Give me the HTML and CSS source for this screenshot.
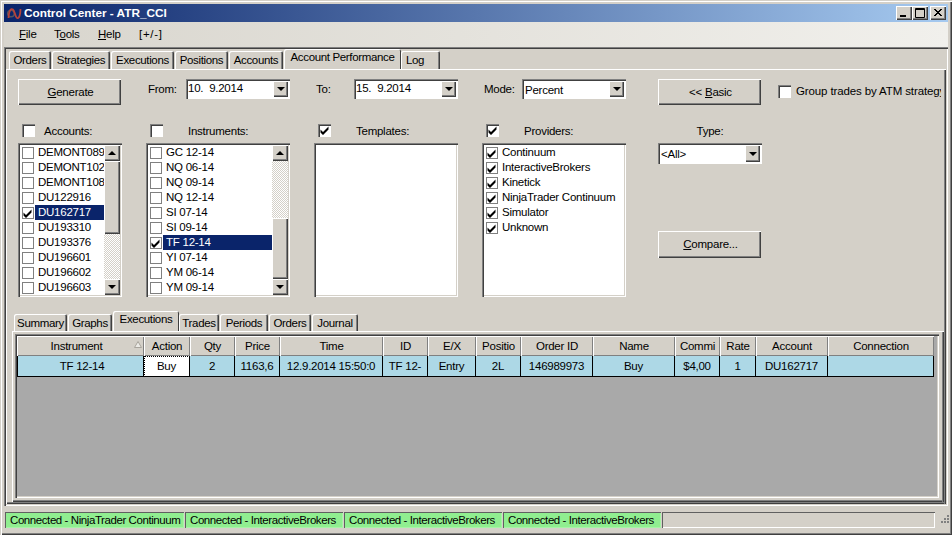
FILE: index.html
```html
<!DOCTYPE html>
<html lang="en">
<head>
<meta charset="utf-8">
<title>Control Center - ATR_CCI</title>
<link rel="stylesheet" href="styles.css">
</head>
<body>
<svg class="defs" width="0" height="0" aria-hidden="true">
  <symbol id="tick" viewBox="0 0 11 11"><path d="M1.5 4.5 L4 7 L9.5 1.5 L9.5 4.5 L4 10 L1.5 7.5 Z" fill="#000"/></symbol>
</svg>
<div class="window">
  <header class="titlebar">
    <svg class="logo" width="15" height="13" viewBox="0 0 15 13"><circle cx="4" cy="6.5" r="3.3" fill="none" stroke="#55555f" stroke-width="1.6"/><path d="M1.5 11 C2 3 4 1 6 2.5 C8 4 8 10 10 11 C12 12 13.5 8 13.5 2" fill="none" stroke="#b5433b" stroke-width="1.8"/></svg>
    <span class="title-text">Control Center - ATR_CCI</span>
    <div class="caption-btns">
      <span class="cap-btn"><svg width="16" height="14" viewBox="0 0 16 14"><rect x="4" y="9" width="6" height="2" fill="#000"/></svg></span>
      <span class="cap-btn"><svg width="16" height="14" viewBox="0 0 16 14"><path d="M3.5 2.5h9v9h-9z M3 3.5h10" fill="none" stroke="#000"/></svg></span>
      <span class="cap-btn cap-close"><svg width="16" height="14" viewBox="0 0 16 14"><path d="M4 3l7 7M5 3l7 7M11 3l-7 7M12 3l-7 7" stroke="#000" fill="none"/></svg></span>
    </div>
  </header>
  <nav class="menubar">
    <span class="menu-item"><u>F</u>ile</span>
    <span class="menu-item">T<u>o</u>ols</span>
    <span class="menu-item"><u>H</u>elp</span>
    <span class="menu-item menu-toggle">[+/-]</span>
  </nav>
  <main class="main">
    <div class="tabs main-tabs">
      <span class="tab">Orders</span>
      <span class="tab">Strategies</span>
      <span class="tab">Executions</span>
      <span class="tab">Positions</span>
      <span class="tab">Accounts</span>
      <span class="tab active">Account Performance</span>
      <span class="tab tab-left">Log</span>
    </div>
    <section class="page">
      <div class="form">
        <button class="btn"><u>G</u>enerate</button>
        <div class="field"><span class="field-label">From:</span>
          <div class="combo"><span class="combo-text">10.  9.2014</span><span class="combo-btn"><i class="arrow-down"></i></span></div></div>
        <div class="field"><span class="field-label">To:</span>
          <div class="combo"><span class="combo-text">15.  9.2014</span><span class="combo-btn"><i class="arrow-down"></i></span></div></div>
        <div class="field"><span class="field-label">Mode:</span>
          <div class="combo combo-select"><span class="combo-text">Percent</span><span class="combo-btn"><i class="arrow-down"></i></span></div></div>
        <button class="btn">&lt;&lt; <u>B</u>asic</button>
        <div class="group-check"><span class="box"></span><span class="group-label">Group trades by ATM strategy</span></div>

        <div class="head head-accounts"><span class="box"></span><span class="head-label">Accounts:</span></div>
        <div class="head"><span class="box"></span><span class="head-label">Instruments:</span></div>
        <div class="head"><span class="box"><svg class="tick"><use href="#tick"/></svg></span><span class="head-label">Templates:</span></div>
        <div class="head"><span class="box"><svg class="tick"><use href="#tick"/></svg></span><span class="head-label">Providers:</span></div>
        <div class="head head-type"><span class="head-label">Type:</span></div>
        <div></div>

        <div class="list list-accounts">
          <ul class="rows">
            <li class="row"><span class="cb"></span><span class="row-text">DEMONT089</span></li>
            <li class="row"><span class="cb"></span><span class="row-text">DEMONT102</span></li>
            <li class="row"><span class="cb"></span><span class="row-text">DEMONT108</span></li>
            <li class="row"><span class="cb"></span><span class="row-text">DU122916</span></li>
            <li class="row"><span class="cb"><svg class="tick"><use href="#tick"/></svg></span><span class="row-text sel">DU162717</span></li>
            <li class="row"><span class="cb"></span><span class="row-text">DU193310</span></li>
            <li class="row"><span class="cb"></span><span class="row-text">DU193376</span></li>
            <li class="row"><span class="cb"></span><span class="row-text">DU196601</span></li>
            <li class="row"><span class="cb"></span><span class="row-text">DU196602</span></li>
            <li class="row"><span class="cb"></span><span class="row-text">DU196603</span></li>
          </ul>
          <div class="scroll"><span class="sb-btn"><i class="arrow-up"></i></span><span class="thumb thumb-accounts"></span><span class="track"></span><span class="sb-btn"><i class="arrow-down"></i></span></div>
        </div>
        <div class="list list-instruments">
          <ul class="rows">
            <li class="row"><span class="cb"></span><span class="row-text">GC 12-14</span></li>
            <li class="row"><span class="cb"></span><span class="row-text">NQ 06-14</span></li>
            <li class="row"><span class="cb"></span><span class="row-text">NQ 09-14</span></li>
            <li class="row"><span class="cb"></span><span class="row-text">NQ 12-14</span></li>
            <li class="row"><span class="cb"></span><span class="row-text">SI 07-14</span></li>
            <li class="row"><span class="cb"></span><span class="row-text">SI 09-14</span></li>
            <li class="row"><span class="cb"><svg class="tick"><use href="#tick"/></svg></span><span class="row-text sel">TF 12-14</span></li>
            <li class="row"><span class="cb"></span><span class="row-text">YI 07-14</span></li>
            <li class="row"><span class="cb"></span><span class="row-text">YM 06-14</span></li>
            <li class="row"><span class="cb"></span><span class="row-text">YM 09-14</span></li>
          </ul>
          <div class="scroll"><span class="sb-btn"><i class="arrow-up"></i></span><span class="track"></span><span class="thumb thumb-instruments"></span><span class="sb-btn"><i class="arrow-down"></i></span></div>
        </div>
        <div class="list"></div>
        <div class="list">
          <ul class="rows">
            <li class="row"><span class="cb"><svg class="tick"><use href="#tick"/></svg></span><span class="row-text">Continuum</span></li>
            <li class="row"><span class="cb"><svg class="tick"><use href="#tick"/></svg></span><span class="row-text">InteractiveBrokers</span></li>
            <li class="row"><span class="cb"><svg class="tick"><use href="#tick"/></svg></span><span class="row-text">Kinetick</span></li>
            <li class="row"><span class="cb"><svg class="tick"><use href="#tick"/></svg></span><span class="row-text">NinjaTrader Continuum</span></li>
            <li class="row"><span class="cb"><svg class="tick"><use href="#tick"/></svg></span><span class="row-text">Simulator</span></li>
            <li class="row"><span class="cb"><svg class="tick"><use href="#tick"/></svg></span><span class="row-text">Unknown</span></li>
          </ul>
        </div>
        <div class="type-col">
          <div class="combo combo-type"><span class="combo-text">&lt;All&gt;</span><span class="combo-btn"><i class="arrow-down"></i></span></div>
          <button class="btn btn-compare"><u>C</u>ompare...</button>
        </div>
        <div></div>
      </div>

      <div class="lower">
        <div class="tabs sub-tabs">
          <span class="tab">Summary</span>
          <span class="tab">Graphs</span>
          <span class="tab active">Executions</span>
          <span class="tab">Trades</span>
          <span class="tab">Periods</span>
          <span class="tab">Orders</span>
          <span class="tab">Journal</span>
        </div>
        <div class="sub-page">
          <div class="grid-frame">
            <div class="table">
              <div class="th th-sorted">Instrument<svg class="sort" width="8" height="7" viewBox="0 0 8 7"><path d="M4 .5L7.5 6.5H.5Z" fill="#ecebe6" stroke="#a8a49c"/></svg></div>
              <div class="th">Action</div><div class="th">Qty</div><div class="th">Price</div><div class="th">Time</div><div class="th">ID</div><div class="th">E/X</div><div class="th">Positio</div><div class="th">Order ID</div><div class="th">Name</div><div class="th">Commi</div><div class="th">Rate</div><div class="th">Account</div><div class="th">Connection</div>
              <div class="td td-first">TF 12-14</div><div class="td td-focus">Buy</div><div class="td">2</div><div class="td">1163,6</div><div class="td">12.9.2014 15:50:0</div><div class="td">TF 12-</div><div class="td">Entry</div><div class="td">2L</div><div class="td">146989973</div><div class="td">Buy</div><div class="td">$4,00</div><div class="td">1</div><div class="td">DU162717</div><div class="td"></div>
            </div>
          </div>
        </div>
      </div>
    </section>
  </main>
  <footer class="statusbar">
    <span class="status conn conn-a">Connected - NinjaTrader Continuum</span>
    <span class="status conn conn-b">Connected - InteractiveBrokers</span>
    <span class="status conn conn-b">Connected - InteractiveBrokers</span>
    <span class="status conn conn-b">Connected - InteractiveBrokers</span>
    <span class="status status-empty"></span>
    <svg class="grip" width="16" height="16" viewBox="0 0 16 16"><path d="M11 3h2v2h-2zM8 6h2v2H8zM11 6h2v2h-2zM5 9h2v2H5zM8 9h2v2H8zM11 9h2v2h-2z" fill="#808080"/></svg>
  </footer>
</div>
</body>
</html>
```
FILE: styles.css
```css
* { box-sizing: border-box; }
html, body { margin: 0; padding: 0; }
body {
  width: 952px;
  height: 535px;
  overflow: hidden;
  font: 11.5px/15px "Liberation Sans", Arial, sans-serif;
  letter-spacing: -0.25px;
  color: #000;
  background: #d4d0c8;
}
.defs { display: block; height: 0; }
ul { list-style: none; margin: 0; padding: 0; }

.window {
  width: 952px;
  height: 535px;
  padding: 4px;
  display: flex;
  flex-direction: column;
  background: #d4d0c8;
  box-shadow: inset 1px 1px #d4d0c8, inset 2px 2px #fff, inset -1px -1px #404040, inset -2px -2px #808080;
}

.titlebar {
  height: 18px;
  flex: none;
  display: flex;
  align-items: center;
  padding: 0 2px 0 3px;
  background: linear-gradient(90deg, #0a246a, #a6caf0);
  color: #fff;
  font-weight: bold;
  font-size: 11.8px;
  letter-spacing: 0;
}
.logo { margin-right: 2px; }
.caption-btns { margin-left: auto; display: flex; }
.cap-btn {
  width: 16px;
  height: 14px;
  display: block;
  background: #d4d0c8;
  box-shadow: inset 1px 1px #fff, inset -1px -1px #404040, inset -2px -2px #808080;
}
.cap-close { margin-left: 2px; }
.cap-btn svg { display: block; }

.menubar {
  height: 25px;
  flex: none;
  display: grid;
  grid-template-columns: 35px 44px 41px auto;
  justify-content: start;
  align-items: center;
  padding-left: 15px;
  background: linear-gradient(90deg, #d8d5cd, #f1f0ec);
}
.menu-toggle { letter-spacing: .7px; }

.main {
  flex: 1;
  min-height: 0;
  display: flex;
  flex-direction: column;
  box-shadow: inset 1px 1px #808080, inset 2px 2px #404040, inset -1px -1px #fff;
  padding: 2px;
}

.tabs { display: grid; align-items: end; flex: none; letter-spacing: -0.35px; }
.main-tabs {
  height: 20px;
  grid-template-columns: 43px 59px 64px 54px 55px 117px 40px;
  padding-left: 3px;
}
.sub-tabs {
  height: 21px;
  grid-template-columns: 54px 45px 66px 41px 49px 43px 47px;
  padding-left: 2px;
}
.tab {
  height: 18px;
  margin-right: 1px;
  display: block;
  text-align: center;
  line-height: 19px;
  border-radius: 2px 2px 0 0;
  box-shadow: inset 1px 1px #fff, inset -1px 0 #404040, inset -2px 0 #808080;
}
.tab.active {
  height: 20px;
  margin-right: 0;
  line-height: 17px;
  box-shadow: inset 1px 1px #fff, inset -1px 0 #404040;
  position: relative;
  z-index: 1;
}
.tab-left { text-align: left; padding-left: 5px; }
.sub-tabs .tab { height: 17px; line-height: 18px; }
.sub-tabs .tab.active { height: 20px; line-height: 16px; }

.page {
  flex: 1;
  min-height: 0;
  overflow: hidden;
  display: flex;
  flex-direction: column;
  padding: 10px 2px 2px 12px;
  box-shadow: inset 0 1px #fff, inset 1px 0 #fff, inset -1px 0 #404040, inset -2px 0 #808080, inset 0 -1px #404040, inset 0 -2px #808080;
}

.form {
  display: grid;
  grid-template-columns: 104px 144px 144px 144px 112px 163px;
  grid-template-rows: 26px 38px 154px;
  column-gap: 24px;
  flex: none;
  width: 923px;
  overflow: hidden;
}
.form > :nth-child(6n+5) { margin-left: 8px; }
.form > :nth-child(6n) { margin-left: -8px; }

.btn {
  height: 26px;
  width: 103px;
  padding: 0 0 0 2px;
  border: 0;
  font: inherit;
  letter-spacing: inherit;
  color: inherit;
  background: #d4d0c8;
  box-shadow: inset 1px 1px #fff, inset -1px -1px #404040, inset -2px -2px #808080;
}
.field { display: flex; justify-content: space-between; align-items: center; height: 20px; }
.field-label { padding-left: 2px; line-height: 25px; }
.combo {
  width: 104px;
  height: 20px;
  display: flex;
  justify-content: space-between;
  background: #fff;
  padding: 2px;
  box-shadow: inset 1px 1px #808080, inset 2px 2px #404040, inset -1px -1px #fff;
}
.combo-text { white-space: pre; line-height: 15px; }
.combo-select .combo-text { line-height: 19px; padding-left: 1px; }
.combo-btn {
  width: 15px;
  height: 16px;
  display: flex;
  align-items: center;
  justify-content: center;
  background: #d4d0c8;
  box-shadow: inset 1px 1px #fff, inset -1px -1px #404040, inset -2px -2px #808080;
}
.arrow-down, .arrow-up {
  display: block;
  width: 0;
  height: 0;
  border-left: 4px solid transparent;
  border-right: 4px solid transparent;
}
.arrow-down { border-top: 4px solid #000; }
.arrow-up { border-bottom: 4px solid #000; }

.group-check { display: flex; align-items: center; gap: 5px; height: 24px; white-space: nowrap; overflow: hidden; letter-spacing: -0.12px; }
.box {
  width: 13px;
  height: 13px;
  flex: none;
  display: block;
  background: #fff;
  box-shadow: inset 1px 1px #808080, inset 2px 2px #404040, inset -1px -1px #fff;
}
.box .tick { width: 11px; height: 11px; display: block; margin: 1px; }

.head { display: flex; align-items: center; height: 15px; margin-top: 18px; padding-left: 4px; gap: 25px; }
.head-accounts { gap: 9px; }
.head-label { padding-top: 2px; }
.form > .head-type { padding-left: 0; justify-content: center; gap: 0; }

.list {
  height: 154px;
  display: flex;
  background: #fff;
  padding: 2px;
  overflow: hidden;
  box-shadow: inset 1px 1px #808080, inset 2px 2px #404040, inset -1px -1px #fff, inset -2px -2px #d4d0c8;
}
.rows { flex: 1; min-width: 0; overflow: hidden; }
.row { height: 15px; display: flex; align-items: center; padding-left: 2px; white-space: nowrap; }
.cb {
  width: 12px;
  height: 12px;
  flex: none;
  margin-top: 1px;
  border: 1px solid #808080;
  background: #fff;
}
.cb .tick { width: 11px; height: 11px; display: block; margin: 0 0 0 -1px; }
.row-text { flex: 1; height: 15px; margin-left: 1px; padding-left: 3px; line-height: 14px; overflow: hidden; }
.sel { background: #0a246a; color: #fff; }

.scroll { width: 16px; flex: none; display: flex; flex-direction: column; height: 150px; }
.sb-btn {
  flex: none;
  height: 16px;
  display: flex;
  align-items: center;
  justify-content: center;
  background: #d4d0c8;
  box-shadow: inset 1px 1px #fff, inset -1px -1px #404040, inset -2px -2px #808080;
}
.thumb {
  flex: none;
  background: #d4d0c8;
  box-shadow: inset 1px 1px #fff, inset -1px -1px #404040, inset -2px -2px #808080;
}
.thumb-accounts { height: 73px; }
.thumb-instruments { height: 61px; }
.track {
  flex: 1;
  background-color: #fff;
  background-image: conic-gradient(#d4d0c8 25%, #fff 0 50%, #d4d0c8 0 75%, #fff 0);
  background-size: 2px 2px;
}

.type-col { display: flex; flex-direction: column; }
.combo-type { height: 21px; }
.combo-type .combo-text { line-height: 19px; padding-left: 1px; }
.combo-type .combo-btn { height: 17px; }
.btn-compare { margin-top: 67px; height: 27px; }

.lower { flex: 1; min-height: 0; display: flex; flex-direction: column; margin: 13px 0 0 -6px; }
.sub-page {
  flex: 1;
  min-height: 0;
  padding: 3px 5px 4px 3px;
  box-shadow: inset 0 1px #fff, inset 1px 0 #fff, inset -1px 0 #404040, inset -2px 0 #808080, inset 0 -1px #404040, inset 0 -2px #808080;
}
.grid-frame {
  height: 100%;
  padding: 2px;
  background: #a9a9a9;
  box-shadow: inset 1px 1px #808080, inset 2px 2px #404040, inset -1px -1px #fff, inset -2px -2px #d4d0c8;
}
.table {
  display: grid;
  grid-template-columns: 127px 46px 45px 45px 103px 45px 48px 45px 72px 82px 45px 36px 72px 106px;
  grid-template-rows: 20px 21px;
}
.th, .td {
  display: flex;
  align-items: center;
  justify-content: center;
  white-space: nowrap;
  overflow: hidden;
  background: #d4d0c8;
}
.th {
  position: relative;
  box-shadow: inset 1px 1px #fff, inset -1px -1px #808080;
}
.th-sorted { padding-right: 8px; }
.td {
  background: #add8e6;
  border-right: 1px solid #000;
  border-bottom: 1px solid #000;
}
.td-first { border-left: 1px solid #000; padding-left: 3px; }
.td-focus {
  background: #fff;
  outline: 1px dotted #000;
  outline-offset: -1px;
}
.sort { position: absolute; right: 2px; top: 5px; }

.statusbar {
  height: 19px;
  flex: none;
  display: grid;
  grid-template-columns: 179px 158px 158px 158px 1fr 16px;
  column-gap: 1px;
  align-items: start;
  margin: 6px -4px 0 1px;
}
.status {
  height: 16px;
  display: block;
  padding-left: 5px;
  white-space: nowrap;
  overflow: hidden;
  line-height: 16px;
  letter-spacing: -0.42px;
}
.conn {
  background: #90ee90;
  box-shadow: inset 1px 1px #606060, inset -1px -1px #a6f4a6;
}
.status-empty { box-shadow: inset 1px 1px #606060, inset -1px -1px #fff; }
.grip { display: block; }
```
